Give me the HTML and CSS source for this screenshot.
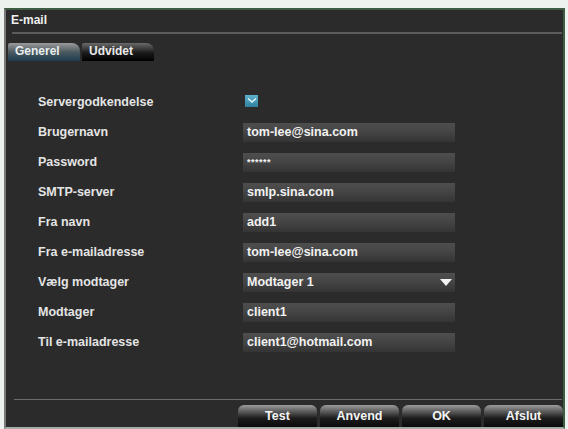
FILE: index.html
```html
<!DOCTYPE html>
<html>
<head>
<meta charset="utf-8">
<link rel="stylesheet" href="styles.css">
</head>
<body>
<div class="win">
  <div class="title">E-mail</div>
  <div class="rule"></div>
  <div class="tabs">
    <div class="tab active">Generel</div>
    <div class="tab">Udvidet</div>
  </div>
  <div class="form">
    <div class="row"><div class="label">Servergodkendelse</div><div class="check"><svg width="10" height="8" viewBox="0 0 10 8"><path d="M1 1.5 L5 5 L9 1.5" fill="none" stroke="#dff4fa" stroke-width="1.6"/></svg></div></div>
    <div class="row"><div class="label">Brugernavn</div><div class="field">tom-lee@sina.com</div></div>
    <div class="row"><div class="label">Password</div><div class="field pw">******</div></div>
    <div class="row"><div class="label">SMTP-server</div><div class="field">smlp.sina.com</div></div>
    <div class="row"><div class="label">Fra navn</div><div class="field">add1</div></div>
    <div class="row"><div class="label">Fra e-mailadresse</div><div class="field">tom-lee@sina.com</div></div>
    <div class="row"><div class="label">Vælg modtager</div><div class="field select">Modtager 1<span class="arrow"></span></div></div>
    <div class="row"><div class="label">Modtager</div><div class="field">client1</div></div>
    <div class="row"><div class="label">Til e-mailadresse</div><div class="field">client1@hotmail.com</div></div>
  </div>
  <div class="bottom-rule"></div>
  <div class="buttons">
    <div class="btn">Test</div>
    <div class="btn">Anvend</div>
    <div class="btn">OK</div>
    <div class="btn">Afslut</div>
  </div>
</div>
</body>
</html>
```
FILE: styles.css
```css
html, body {
  margin: 0;
  padding: 0;
}
body {
  background: #eef2ee;
  width: 568px;
  height: 429px;
  overflow: hidden;
  font-family: "Liberation Sans", Arial, sans-serif;
  font-weight: bold;
  font-size: 12.5px;
  color: #e6e6e6;
}
.win {
  margin: 8px 0 0 4px;
  width: 557px;
  height: 417px;
  background: #2b2b2b;
  border-top: 2px solid #3e5c42;
  border-right: 2px solid #3e5c42;
  border-left: 2px solid #7a7a7a;
  border-bottom: 2px solid #a8aaa8;
  display: flex;
  flex-direction: column;
}
.title {
  height: 22px;
  line-height: 20px;
  padding-left: 5px;
  font-size: 12px;
  color: #f0f0f0;
}
.rule {
  height: 2px;
  background: #5c5c5c;
  margin: 0 1px 0 6px;
}
.tabs {
  display: flex;
  margin-top: 9px;
  padding-left: 2px;
  gap: 2px;
  font-size: 12px;
}
.tab {
  width: 72px;
  height: 18px;
  line-height: 16px;
  padding-left: 7px;
  box-sizing: border-box;
  border-radius: 2px 8px 0 0;
  background: linear-gradient(#6a6a6a, #1a1a1a 55%, #000);
  color: #eaeaea;
}
.tab.active {
  background: linear-gradient(#9a9a9a, #4c5a60 50%, #1d3d4f);
  color: #e8eef0;
}
.form {
  margin-top: 26px;
  padding-left: 32px;
  display: flex;
  flex-direction: column;
}
.row {
  display: flex;
  align-items: center;
  height: 30px;
}
.row:first-child {
  height: 30px;
}
.label {
  width: 205px;
  color: #e4e4e4;
}
.check {
  width: 13px;
  height: 12px;
  margin-left: 2px;
  background: linear-gradient(#5fb0cc, #2f7f9f);
  display: flex;
  align-items: center;
  justify-content: center;
  margin-top: -2px;
}
.field {
  width: 212px;
  height: 19px;
  line-height: 19px;
  padding-left: 4px;
  box-sizing: border-box;
  background: linear-gradient(#4e4e4e, #454545 45%, #343434);
  color: #f2f2f2;
  position: relative;
}
.field.pw {
  font-size: 9px;
  letter-spacing: 0.5px;
}
.arrow {
  position: absolute;
  right: 3px;
  top: 6px;
  width: 0;
  height: 0;
  border-left: 6px solid transparent;
  border-right: 6px solid transparent;
  border-top: 7px solid #f4f4f4;
}
.bottom-rule {
  margin: auto 1px 0 8px;
  height: 1px;
  background: #6a6a6a;
}
.buttons {
  display: flex;
  justify-content: flex-end;
  gap: 3px;
  margin-top: 5px;
  height: 22px;
}
.btn {
  width: 79px;
  height: 22px;
  line-height: 22px;
  text-align: center;
  border-radius: 6px 6px 0 0;
  background: linear-gradient(#9c9c9c, #5a5a5a 30%, #1c1c1c 60%, #0a0a0a);
  color: #f4f4f4;
}
```
